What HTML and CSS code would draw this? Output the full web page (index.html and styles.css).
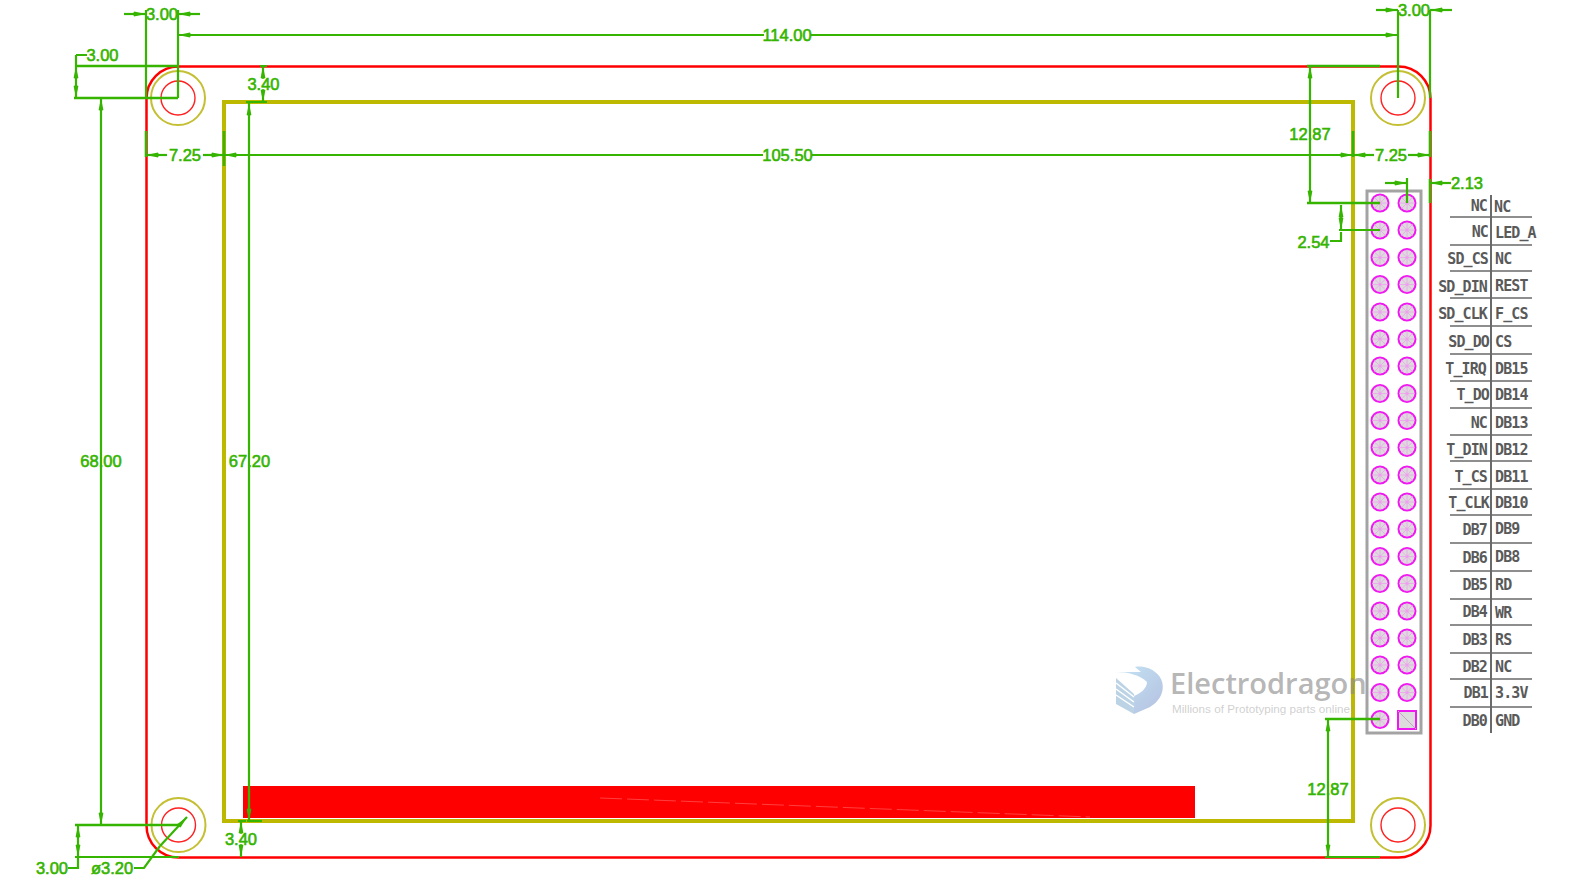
FILE: index.html
```html
<!DOCTYPE html>
<html lang="en">
<head>
<meta charset="utf-8">
<title>LCD module dimensions</title>
<link rel="stylesheet" href="styles.css">
</head>
<body>
<svg class="drawing" width="1590" height="890" viewBox="0 0 1590 890" xmlns="http://www.w3.org/2000/svg">
  <defs>
    <marker id="arrow" markerUnits="userSpaceOnUse" markerWidth="14" markerHeight="8" refX="13" refY="4" orient="auto">
      <path class="head" d="M0 4 1 1.6 13 4 1 6.4Z"/>
    </marker>
    <g id="pad">
      <circle class="pad" r="8.5"/>
      <path class="spoke" d="M-8 0H8M0-8V8M-5.700-5.700 5.700 5.700M-5.700 5.700 5.700-5.700"/>
      <circle class="pad-eye" r="1.5"/>
    </g>
    <linearGradient id="wing" x1="0" y1="0" x2="1" y2="1">
      <stop offset="0" stop-color="#c4e4f4"/>
      <stop offset="1" stop-color="#b4c0e0"/>
    </linearGradient>
  </defs>

  <!-- board -->
  <rect class="board" x="146.500" y="66.500" width="1284" height="791" rx="32"/>
  <rect class="viewport" x="224" y="102" width="1129" height="719"/>
  <rect class="backlight" x="243" y="786" width="952" height="32"/>
  <path class="seam" d="M600 798 1090 817"/>

  <g class="hole-outer">
    <circle cx="178" cy="98" r="27"/><circle cx="1398" cy="98" r="27"/>
    <circle cx="178.500" cy="825" r="27"/><circle cx="1398" cy="825" r="27"/>
  </g>
  <g class="hole-inner">
    <circle cx="178" cy="98" r="17"/><circle cx="1398" cy="98" r="17"/>
    <circle cx="178.500" cy="825" r="17"/><circle cx="1398" cy="825" r="17"/>
  </g>

  <!-- header -->
  <rect class="header" x="1367" y="191" width="54" height="542"/>
  <use href="#pad" x="1380" y="203"/><use href="#pad" x="1407" y="203"/>
  <use href="#pad" x="1380" y="230"/><use href="#pad" x="1407" y="230"/>
  <use href="#pad" x="1380" y="257.500"/><use href="#pad" x="1407" y="257.500"/>
  <use href="#pad" x="1380" y="284.500"/><use href="#pad" x="1407" y="284.500"/>
  <use href="#pad" x="1380" y="312"/><use href="#pad" x="1407" y="312"/>
  <use href="#pad" x="1380" y="339"/><use href="#pad" x="1407" y="339"/>
  <use href="#pad" x="1380" y="366"/><use href="#pad" x="1407" y="366"/>
  <use href="#pad" x="1380" y="393.500"/><use href="#pad" x="1407" y="393.500"/>
  <use href="#pad" x="1380" y="420.500"/><use href="#pad" x="1407" y="420.500"/>
  <use href="#pad" x="1380" y="447.500"/><use href="#pad" x="1407" y="447.500"/>
  <use href="#pad" x="1380" y="475"/><use href="#pad" x="1407" y="475"/>
  <use href="#pad" x="1380" y="502"/><use href="#pad" x="1407" y="502"/>
  <use href="#pad" x="1380" y="529"/><use href="#pad" x="1407" y="529"/>
  <use href="#pad" x="1380" y="556.500"/><use href="#pad" x="1407" y="556.500"/>
  <use href="#pad" x="1380" y="583.500"/><use href="#pad" x="1407" y="583.500"/>
  <use href="#pad" x="1380" y="611"/><use href="#pad" x="1407" y="611"/>
  <use href="#pad" x="1380" y="638"/><use href="#pad" x="1407" y="638"/>
  <use href="#pad" x="1380" y="665"/><use href="#pad" x="1407" y="665"/>
  <use href="#pad" x="1380" y="692.500"/><use href="#pad" x="1407" y="692.500"/>
  <use href="#pad" x="1380" y="719.500"/>
  <rect class="pad" x="1398" y="711" width="18" height="18"/>
  <path class="spoke-grey" d="M1398 711 1416 729"/>

  <!-- watermark -->
  <g class="mark">
    <path class="mark-wing" fill="url(#wing)" d="M1116 672 1141 672 1135 667C1146 665 1157 671 1161 679 1166 690 1160 701 1150 707L1134 714 1131 697C1141 694 1147 688 1147 682 1140 675 1128 672 1116 672Z"/>
    <path class="mark-stack" d="M1116 678 1134 694 1134 714 1116 704Z"/>
    <path class="mark-gap" d="M1116 683 1134 697M1116 689 1134 702M1116 695 1134 707"/>
    <text class="mark-name" x="1170" y="694">Electrodragon</text>
    <text class="mark-tag" x="1172" y="713">Millions of Prototyping parts online!</text>
  </g>

  <!-- pin table -->
  <path class="rule" d="M1491 195V733"/>
  <path class="rule-thin" d="M1450 217H1532M1450 245H1532M1450 271H1532M1450 298H1532M1450 326H1532M1450 354H1532M1450 381H1532M1450 408H1532M1450 435H1532M1450 461H1532M1450 489H1532M1450 515H1532M1450 543H1532M1450 571H1532M1450 599H1532M1450 625H1532M1450 653H1532M1450 679H1532M1450 707H1532"/>
  <g class="pin-left">
    <text x="1487" y="211">NC</text><text x="1488" y="237">NC</text>
    <text x="1488" y="264">SD_CS</text><text x="1487" y="292">SD_DIN</text>
    <text x="1487" y="319">SD_CLK</text><text x="1489" y="347">SD_DO</text>
    <text x="1486" y="374">T_IRQ</text><text x="1489" y="400">T_DO</text>
    <text x="1487" y="428">NC</text><text x="1487" y="455">T_DIN</text>
    <text x="1487" y="482">T_CS</text><text x="1489" y="508">T_CLK</text>
    <text x="1487" y="535">DB7</text><text x="1487" y="563">DB6</text>
    <text x="1487" y="590">DB5</text><text x="1487" y="617">DB4</text>
    <text x="1487" y="645">DB3</text><text x="1487" y="672">DB2</text>
    <text x="1488" y="698">DB1</text><text x="1487" y="726">DB0</text>
  </g>
  <g class="pin-right">
    <text x="1494" y="212">NC</text><text x="1495" y="238">LED_A</text>
    <text x="1495" y="264">NC</text><text x="1495" y="291">REST</text>
    <text x="1495" y="319">F_CS</text><text x="1495" y="347">CS</text>
    <text x="1495" y="374">DB15</text><text x="1495" y="400">DB14</text>
    <text x="1495" y="428">DB13</text><text x="1495" y="455">DB12</text>
    <text x="1495" y="482">DB11</text><text x="1495" y="508">DB10</text>
    <text x="1495" y="534">DB9</text><text x="1495" y="562">DB8</text>
    <text x="1495" y="590">RD</text><text x="1495" y="618">WR</text>
    <text x="1495" y="645">RS</text><text x="1495" y="672">NC</text>
    <text x="1495" y="698">3.3V</text><text x="1495" y="726">GND</text>
  </g>

  <!-- dimension lines -->
  <g class="dim">
    <path d="M146 10V98M178 10V98M1398 10V98M1430 10V98"/>
    <path class="heavy" d="M74 98H178M76 66H178M75 825H179M1307 66H1380M1307 203H1380M1325 719H1380"/>
    <path d="M75 857H179M1339 230H1380M1325 857H1380"/>
    <path d="M76 55V66M87 55H76M78 857V868H68M1330 241H1341V232M1407 178V203"/>
    <path d="M134 868H144L160 846"/>
    <path d="M246 102H267M260 66H267M238 821H246M247 821H262"/>
    <path class="heavy" d="M146 131V157M224 131V166M1353 131V157M1430 131V157M1430 179V203"/>
    <path marker-end="url(#arrow)" d="M124 14H146"/><path marker-end="url(#arrow)" d="M200 14H178"/>
    <path marker-end="url(#arrow)" d="M1376 10H1398"/><path marker-end="url(#arrow)" d="M1452 10H1430"/>
    <path marker-end="url(#arrow)" d="M764 35H178"/><path marker-end="url(#arrow)" d="M811 35H1398"/>
    <path marker-end="url(#arrow)" d="M76 82V66"/><path marker-end="url(#arrow)" d="M76 82V98"/>
    <path marker-end="url(#arrow)" d="M263 78V66"/><path marker-end="url(#arrow)" d="M263 92V102"/>
    <path marker-end="url(#arrow)" d="M249 461V103"/><path marker-end="url(#arrow)" d="M249 461V821"/>
    <path marker-end="url(#arrow)" d="M101 461V98"/><path marker-end="url(#arrow)" d="M101 461V825"/>
    <path marker-end="url(#arrow)" d="M167 155H146"/><path marker-end="url(#arrow)" d="M203 155H224"/>
    <path marker-end="url(#arrow)" d="M763 155H224"/><path marker-end="url(#arrow)" d="M812 155H1353"/>
    <path marker-end="url(#arrow)" d="M1374 155H1353"/><path marker-end="url(#arrow)" d="M1408 155H1430"/>
    <path marker-end="url(#arrow)" d="M1310 134V66"/><path marker-end="url(#arrow)" d="M1310 134V203"/>
    <path marker-end="url(#arrow)" d="M1385 183H1407"/><path marker-end="url(#arrow)" d="M1451 183H1430"/>
    <path marker-end="url(#arrow)" d="M1341 218V205"/><path marker-end="url(#arrow)" d="M1341 218V230"/>
    <path marker-end="url(#arrow)" d="M1328 789V719"/><path marker-end="url(#arrow)" d="M1328 789V857"/>
    <path marker-end="url(#arrow)" d="M78 841V825"/><path marker-end="url(#arrow)" d="M78 841V857"/>
    <path marker-end="url(#arrow)" d="M241 832V821"/><path marker-end="url(#arrow)" d="M241 849V857"/>
    <path marker-end="url(#arrow)" d="M160 846 187 817"/>
  </g>
  <g class="dim-text">
    <text x="162" y="20">3.00</text>
    <text x="1414" y="16">3.00</text>
    <text x="102.500" y="61">3.00</text>
    <text x="787" y="41">114.00</text>
    <text x="263.500" y="90">3.40</text>
    <text x="185" y="161">7.25</text>
    <text x="787.500" y="161">105.50</text>
    <text x="1391" y="161">7.25</text>
    <text x="1310" y="140">12.87</text>
    <text x="1467" y="189">2.13</text>
    <text x="1313.500" y="248">2.54</text>
    <text x="101" y="467">68.00</text>
    <text x="249.500" y="467">67.20</text>
    <text x="1328" y="795">12.87</text>
    <text x="241" y="845">3.40</text>
    <text x="52" y="874">3.00</text>
    <text x="112" y="874">ø3.20</text>
  </g>
</svg>
</body>
</html>
```

FILE: styles.css
```css
html, body {
  margin: 0;
  padding: 0;
  background: #ffffff;
}

.drawing {
  display: block;
}

.board {
  fill: none;
  stroke: #ff0000;
  stroke-width: 2.5;
}

.viewport {
  fill: none;
  stroke: #bdb800;
  stroke-width: 4;
}

.backlight {
  fill: #ff0000;
}

.seam {
  fill: none;
  stroke: #ff6a6a;
  stroke-width: 0.6;
  stroke-dasharray: 22 5;
}

.hole-outer circle {
  fill: none;
  stroke: #c4bf33;
  stroke-width: 2;
}

.hole-inner circle {
  fill: none;
  stroke: #ff2020;
  stroke-width: 1.4;
}

.header {
  fill: none;
  stroke: #a3a3a3;
  stroke-width: 3;
}

.pad {
  fill: #dcdcdc;
  stroke: #f018f0;
  stroke-width: 2;
}

.spoke {
  fill: none;
  stroke: #eea0ee;
  stroke-width: 0.8;
}

.spoke-grey {
  fill: none;
  stroke: #c8a0c8;
  stroke-width: 1;
}

.pad-eye {
  fill: #eea0ee;
}

.mark {
  pointer-events: none;
}

.mark-stack {
  fill: #bcd3e6;
}

.mark-gap {
  fill: none;
  stroke: #ffffff;
  stroke-width: 1.5;
}

.mark-name {
  font-family: "Open Sans", "Liberation Sans", sans-serif;
  font-size: 29px;
  font-weight: 600;
  fill: #8c8c8c;
  fill-opacity: 0.65;
}

.mark-tag {
  font-family: "Liberation Sans", sans-serif;
  font-size: 11.700px;
  fill: #a8a8a8;
  fill-opacity: 0.55;
}

.rule {
  fill: none;
  stroke: #6a6a6a;
  stroke-width: 2;
}

.rule-thin {
  fill: none;
  stroke: #6a6a6a;
  stroke-width: 1.6;
}

.pin-left text,
.pin-right text {
  font-family: "DejaVu Sans Mono", "Liberation Mono", monospace;
  font-size: 15px;
  font-weight: 700;
  letter-spacing: -0.9px;
  fill: #5a5a5a;
}

.pin-left text {
  text-anchor: end;
}

.dim path {
  fill: none;
  stroke: #35b400;
  stroke-width: 2.2;
}

.dim path.heavy {
  stroke-width: 2.6;
}

.head {
  fill: #35b400;
}

.dim-text text {
  font-family: "Liberation Sans", "DejaVu Sans", sans-serif;
  font-size: 16.500px;
  fill: #35b400;
  stroke: #35b400;
  stroke-width: 0.6;
  text-anchor: middle;
}
```
